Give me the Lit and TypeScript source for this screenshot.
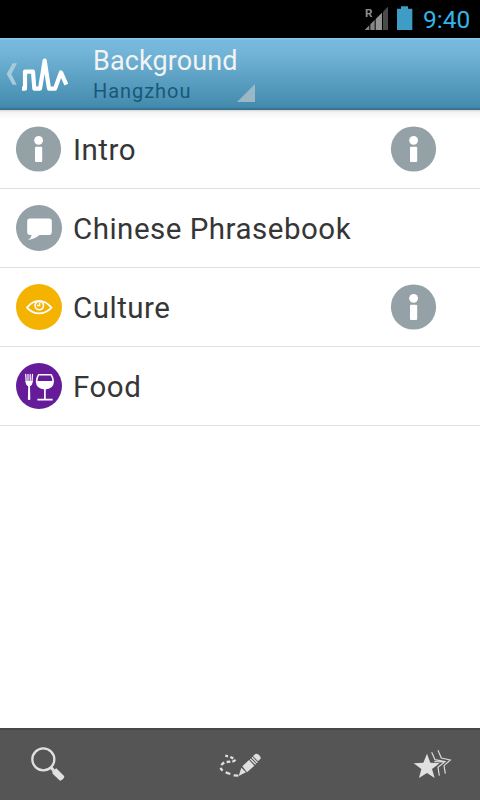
import { LitElement, html, css, svg, nothing } from "lit";
import { customElement, property } from "lit/decorators.js";

const info = svg`<circle cx="23.5" cy="24" r="22.6" fill="#94a1a6"/><circle cx="23.6" cy="15.3" r="4.4" fill="#fff"/><rect x="20" y="21.7" width="7.2" height="15.4" rx="1" fill="#fff"/>`;

const icons: Record<string, unknown> = {
  info,
  chat: svg`<circle cx="24" cy="24" r="23" fill="#94a1a6"/>
    <path fill="#fff" d="M15 14.6H34Q36.8 14.6 36.8 17.4V28Q36.8 31 34 31H24.5Q20 35 13 36Q16.4 33.8 16.6 31H15Q12.2 31 12.2 28V17.4Q12.2 14.6 15 14.6Z"/>`,
  eye: svg`<circle cx="24" cy="24" r="23" fill="#f4b301"/>
    <path fill="none" stroke="#fff" stroke-width="1.9" stroke-linejoin="round" d="M12 24.6Q17.5 17.9 24 17.9T36.5 24.6Q31 30.4 24 30.4T12 24.6Z"/>
    <circle cx="24.3" cy="22.6" r="4.2" fill="none" stroke="#fff" stroke-width="1.6"/>
    <path fill="none" stroke="#fff" stroke-width="1.5" d="M24.6 19.6V22.6H22"/>`,
  food: svg`<circle cx="24" cy="24" r="23" fill="#661c99"/>
    <path fill="none" stroke="#fff" stroke-width="1.2" stroke-linecap="round" d="M10.7 12.4L11.2 20M13 12.4V20M15.2 12.4V20M17.5 12.4L17 20"/>
    <path fill="#fff" d="M10.6 19H17.6Q17.6 23.2 15 24.2L15.3 37.2Q14.1 39 12.9 37.2L13.2 24.2Q10.6 23.2 10.6 19Z"/>
    <path fill="none" stroke="#fff" stroke-width="1.6" stroke-linejoin="round" d="M23.5 12.8H36.3Q38.2 16 38.2 19.5Q37.8 26.6 29.9 26.6T21.6 19.5Q21.6 16 23.5 12.8Z"/>
    <path fill="#fff" d="M22 19H38Q37.6 26.8 29.9 26.8T22 19Z"/>
    <path fill="none" stroke="#fff" stroke-width="1.7" d="M29.9 26V37.5M22.4 37.6H37.6"/>`,
};

@customElement("guide-row")
class GuideRow extends LitElement {
  @property() icon = "info";
  @property() label = "";
  @property({ type: Boolean }) more = false;

  static styles = css`
    :host { display: flex; align-items: center; box-sizing: border-box; height: 79px; padding: 0 42px 0 15px; border-bottom: 1px solid #e1e1e1; }
    svg { width: 48px; height: 48px; flex: none; }
    .label { flex: 1; margin-left: 10px; padding-top: 2px; font-size: 29.5px; line-height: 40px; letter-spacing: 0.5px; color: #363636; white-space: nowrap; }
  `;

  render() {
    return html`
      <svg viewBox="0 0 48 48">${icons[this.icon]}</svg>
      <span class="label">${this.label}</span>
      ${this.more ? html`<svg viewBox="0 0 48 48">${info}</svg>` : nothing}
    `;
  }
}

@customElement("app-root")
class AppRoot extends LitElement {
  static styles = css`
    :host { display: flex; flex-direction: column; width: 480px; height: 800px; background: #fff; font-family: Roboto, "Noto Sans", sans-serif; overflow: hidden; }
    svg { display: block; flex: none; }
    .status { height: 38px; background: #000; display: flex; align-items: center; justify-content: flex-end; box-sizing: border-box; padding-right: 10px; }
    .signal { width: 50px; height: 38px; }
    .clock { width: 47px; margin-left: 10px; font-size: 24.5px; line-height: 38px; color: #33b5e5; white-space: nowrap; padding-top: 1px; box-sizing: border-box; height: 38px; }
    .bar { height: 72px; box-sizing: border-box; display: flex; background: linear-gradient(#8bcbec 0, #78badd 2px, #74b6d9 12px, #438bae 69px, #3f83a6 70px, #2c6684 71px, #4c7c94 72px); }
    .brand { width: 93px; height: 72px; }
    .titles { width: 144px; white-space: nowrap; }
    .title { font-size: 27px; line-height: 32px; padding-top: 7px; color: #f3f3f3; letter-spacing: 0.1px; }
    .place { font-size: 20px; line-height: 24px; padding-top: 2px; color: #1a5878; letter-spacing: 0.95px; }
    .corner { width: 18px; height: 18px; margin-top: 46px; }
    .list { flex: 1; background: linear-gradient(#d6d6d6 0, #f2f2f2 2px, #f8f8f8 5px, #fff 9px); }
    .tools { height: 72px; box-sizing: border-box; border-top: 2px solid #484848; background: #555; display: flex; justify-content: space-between; padding: 0 10px; }
    .tools svg { width: 76px; height: 70px; }
  `;

  render() {
    return html`
      <div class="status">
        <svg class="signal" viewBox="0 0 150 114">
          <path d="M5 90L19 76V90Z" fill="#858585"/>
          <path d="M22 73L35 60V90H22Z" fill="#858585"/>
          <path d="M38 57L57 38V90H38Z" fill="#939393"/>
          <path d="M60 35L75 20V90H60Z" fill="#4a4a4a"/>
          <text x="6" y="50" font-size="35" font-weight="700" fill="#8e8e8e">R</text>
          <path d="M102 26H114V19H135V26H148V90H102Z" fill="#3e9cc5"/>
        </svg>
        <span class="clock">9:40</span>
      </div>
      <div class="bar">
        <svg class="brand" viewBox="0 6 279 216">
          <path d="M38 82H51L34 114L50 146H38L20 114Z" fill="#a8cbdc"/>
          <path d="M66 158H75V107H99L103 158H120L134 74L147 158H165L183 109L199 146" fill="none" stroke="#fff" stroke-width="12.5" stroke-linejoin="round"/>
        </svg>
        <div class="titles">
          <div class="title">Background</div>
          <div class="place">Hangzhou</div>
        </div>
        <svg class="corner" viewBox="0 0 18 18"><path d="M18 0V18H0Z" fill="#99b7c5"/></svg>
      </div>
      <div class="list">
        <guide-row icon="info" label="Intro" more></guide-row>
        <guide-row icon="chat" label="Chinese Phrasebook"></guide-row>
        <guide-row icon="eye" label="Culture" more></guide-row>
        <guide-row icon="food" label="Food"></guide-row>
      </div>
      <div class="tools">
        <svg viewBox="0 30 228 210">
          <circle cx="100" cy="118" r="33" fill="none" stroke="#e0e0e0" stroke-width="7"/>
          <path d="M121 141L131 151" stroke="#e0e0e0" stroke-width="9"/>
          <path d="M127 153L139 145L163 169Q162 179 150 182L128 161Z" fill="#e0e0e0"/>
        </svg>
        <svg viewBox="6 30 228 210">
          <path d="M76 107L84 109M91 111L100 115M106 119Q104 124 97 125M91 125L80 126M73 128Q66 131 65 136M62 143Q63 148 68 152M77 157L91 162M101 166L115 167" fill="none" stroke="#e0e0e0" stroke-width="7"/>
          <path d="M116 168L124 143L138 157ZM127 139L147 120L163 137L141 157Z" fill="#e0e0e0"/>
          <path d="M151 117L167 133M156 112L172 128" stroke="#e0e0e0" stroke-width="4"/>
          <path d="M159 108L166 102Q173 100 179 107T180 118L174 124Z" fill="#e0e0e0"/>
        </svg>
        <svg viewBox="-18 30 228 210">
          <path d="M81 101L91 128L119 130L96 147L104 174L81 159L57 174L64 147L41 130L70 128Z" fill="#e0e0e0"/>
          <path d="M95 97L105 119L135 125L114 142L118 167M114 91L124 114L151 120L132 137L136 161M103 125L131 126" fill="none" stroke="#dcdcdc" stroke-width="3.5"/>
        </svg>
      </div>
    `;
  }
}
